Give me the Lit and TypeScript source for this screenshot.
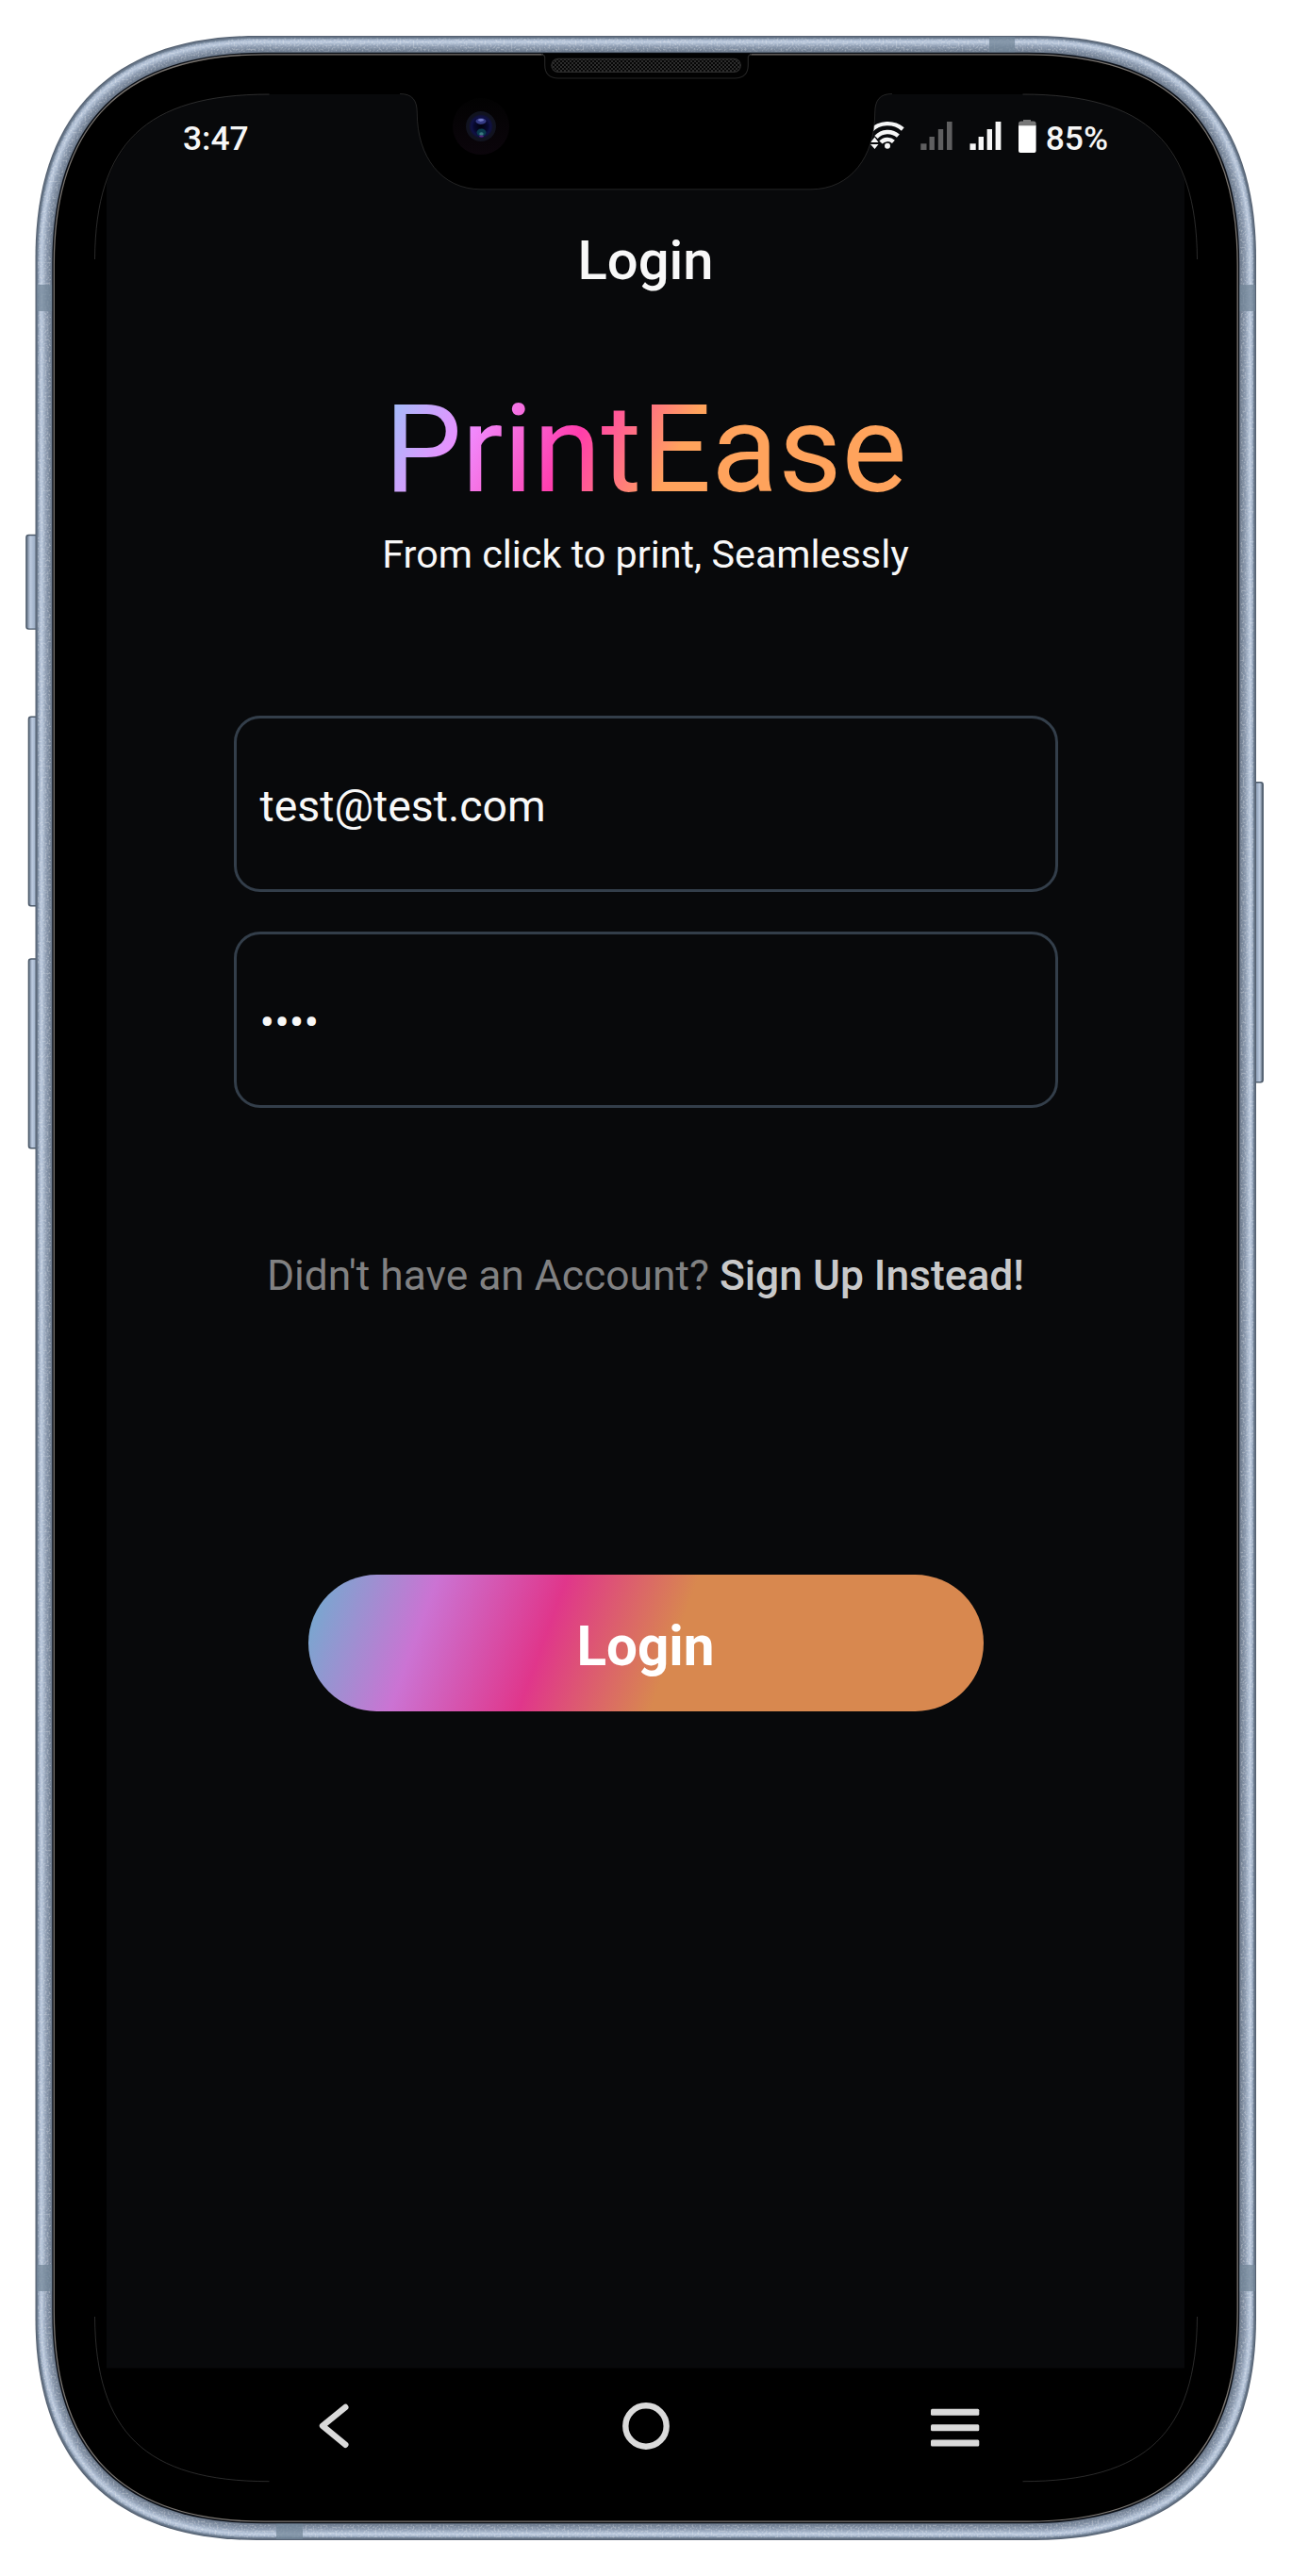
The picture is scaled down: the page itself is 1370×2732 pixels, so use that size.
import { LitElement, html, svg, css } from "lit";
import { customElement } from "lit/decorators.js";

type Rgb = [number, number, number];

/** Rounded outline with continuous corners: len = corner length, c = handle distance from the corner. */
function outline(x0: number, y0: number, x1: number, y1: number, len: number, c: number): string {
  return `M${x0 + len} ${y0}H${x1 - len}C${x1 - c} ${y0} ${x1} ${y0 + c} ${x1} ${y0 + len}V${y1 - len}` +
    `C${x1} ${y1 - c} ${x1 - c} ${y1} ${x1 - len} ${y1}H${x0 + len}C${x0 + c} ${y1} ${x0} ${y1 - c} ${x0} ${y1 - len}` +
    `V${y0 + len}C${x0} ${y0 + c} ${x0 + c} ${y0} ${x0 + len} ${y0}Z`;
}
const body = (i: number) => outline(37.5 + i, 38 + i, 1332 - i, 2694 - i, 235 - i * 0.6, 82 - i * 0.45);

const STOPS: [number, Rgb][] = [
  [0, [86, 98, 114]], [2, [112, 128, 148]], [3.5, [162, 178, 200]], [6, [188, 202, 222]],
  [8, [168, 183, 204]], [11, [138, 153, 174]], [15, [116, 130, 149]], [18, [106, 119, 137]],
];
function shade(i: number): string {
  for (let k = 1; k < STOPS.length; k++) {
    const [a, ca] = STOPS[k - 1];
    const [b, cb] = STOPS[k];
    if (i <= b) {
      const t = (i - a) / (b - a);
      return `rgb(${ca.map((v, n) => Math.round(v + (cb[n] - v) * t)).join(",")})`;
    }
  }
  return "#000";
}
const RINGS = Array.from({ length: 18 }, (_, i) => i);
const SCREEN = outline(100.5, 100, 1269.5, 2631.7, 185, 53);
const NOTCH =
  "M424 99.5C437 99.5 442.3 106 442.3 120C442.3 166 468 200.8 510 200.8H860" +
  "C902 200.8 927.7 166 927.7 120C927.7 106 933 99.5 946 99.5";

@customElement("phone-body")
class PhoneBody extends LitElement {
  static styles = css`
    :host { display: block; }
    svg { display: block; }
  `;
  render() {
    return html`<svg width="1370" height="2732" viewBox="0 0 1370 2732">
      <defs>
        <filter id="grain" filterUnits="userSpaceOnUse" x="30" y="30" width="1310" height="2672">
          <feTurbulence type="fractalNoise" baseFrequency="0.5" numOctaves="2" seed="4"></feTurbulence>
          <feColorMatrix values="0 0 0 0 1  0 0 0 0 1  0 0 0 0 1  4 0 0 0 -1.8"></feColorMatrix>
          <feComposite in2="SourceGraphic" operator="in"></feComposite>
        </filter>
        <linearGradient id="keyL" x1="0" x2="1">
          <stop offset="0" stop-color="#5f6d80"></stop><stop offset=".3" stop-color="#bccbe0"></stop>
          <stop offset=".6" stop-color="#a2b3ca"></stop><stop offset="1" stop-color="#8191a7"></stop>
        </linearGradient>
        <linearGradient id="keyR" x1="1" x2="0">
          <stop offset="0" stop-color="#4d5a69"></stop><stop offset=".3" stop-color="#bccbe0"></stop>
          <stop offset=".6" stop-color="#95a6bd"></stop><stop offset="1" stop-color="#77879b"></stop>
        </linearGradient>
        <clipPath id="scr"><path d=${SCREEN}></path></clipPath>
      </defs>
      <g stroke="#4c5a6a" stroke-width="1.4">
        <rect x="27.9" y="567.5" width="14" height="99.6" rx="2.5" fill="url(#keyL)"></rect>
        <rect x="30.4" y="760.2" width="12" height="200.5" rx="2.5" fill="url(#keyL)"></rect>
        <rect x="30.4" y="1017" width="12" height="200.7" rx="2.5" fill="url(#keyL)"></rect>
        <rect x="1328" y="829.8" width="11.2" height="318" rx="2.5" fill="url(#keyR)"></rect>
      </g>
      ${RINGS.map((i) => svg`<path d=${body(i)} fill=${shade(i)}></path>`)}
      <path d=${body(9.5)} fill="none" stroke="#fff" stroke-width="14" filter="url(#grain)" opacity=".26"></path>
      <g fill="#718597" fill-opacity=".72">
        <rect x="39" y="302" width="17" height="28"></rect>
        <rect x="1314" y="302" width="17" height="28"></rect>
        <rect x="39" y="2402" width="17" height="28"></rect>
        <rect x="1314" y="2402" width="17" height="28"></rect>
        <rect x="1049" y="39" width="27" height="17"></rect>
        <rect x="293" y="2676" width="28" height="17"></rect>
      </g>
      <path d=${body(17.8)} fill="#0b0f16"></path>
      <path d=${body(19.8)} fill="#000" stroke="#7a7570" stroke-width="1.3"></path>
      <rect x="113" y="100" width="1143" height="2411.5" fill="#08090b" clip-path="url(#scr)"></rect>
      <g fill="none" stroke="#555" stroke-width=".5">
        <path d="M100.5 275C101.5 153 153.5 100 285.5 100"></path>
        <path d="M1269.5 275C1268.5 153 1216.5 100 1084.5 100"></path>
        <path d="M100.5 2457C101.5 2579 153.5 2631.7 285.5 2631.7"></path>
        <path d="M1269.5 2457C1268.5 2579 1216.5 2631.7 1084.5 2631.7"></path>
      </g>
    </svg>`;
  }
}

@customElement("phone-notch")
class PhoneNotch extends LitElement {
  static styles = css`
    :host { display: block; }
    svg { display: block; }
  `;
  render() {
    return html`<svg width="1370" height="220" viewBox="0 0 1370 220">
      <defs>
        <pattern id="mesh" width="4" height="4" patternUnits="userSpaceOnUse">
          <rect width="4" height="4" fill="#060606"></rect>
          <rect width="2" height="2" fill="#2c2c2c"></rect><rect x="2" y="2" width="2" height="2" fill="#2c2c2c"></rect>
        </pattern>
        <radialGradient id="lens"><stop offset="0" stop-color="#02020c"></stop>
          <stop offset=".6" stop-color="#070930"></stop><stop offset=".8" stop-color="#101146"></stop>
          <stop offset="1" stop-color="#10112a"></stop></radialGradient>
        <linearGradient id="halo" x1="0" x2="0" y1="0" y2="1">
          <stop offset="0" stop-color="#020202"></stop><stop offset="1" stop-color="#0b050b"></stop>
        </linearGradient>
      </defs>
      <path d=${NOTCH + "Z"} fill="#000"></path>
      <path d=${NOTCH} fill="none" stroke="#444" stroke-width=".5"></path>
      <path d="M576 56.5H795V59H793.3V69C793.3 78 788 83 779 83H592C583 83 577.7 78 577.7 69V59H576Z" fill="#020202"></path>
      <path d="M574 57.8Q577.7 57.8 577.7 61V69C577.7 78 583 83 592 83H779C788 83 793.3 78 793.3 69V61Q793.3 57.8 797 57.8"
        fill="none" stroke="#242424" stroke-width="1.2"></path>
      <rect x="584.8" y="62.3" width="200.6" height="14" rx="7" fill="url(#mesh)" stroke="#2c2c2c" stroke-width="1.2"></rect>
      <circle cx="510" cy="134" r="30" fill="url(#halo)"></circle>
      <circle cx="510" cy="134" r="16" fill="#11131f"></circle>
      <circle cx="510" cy="134" r="12.5" fill="url(#lens)"></circle>
      <ellipse cx="510" cy="128.5" rx="5.5" ry="3.2" fill="#343a84"></ellipse>
      <ellipse cx="510" cy="127.3" rx="3" ry="1.4" fill="#7078c4"></ellipse>
      <ellipse cx="510.5" cy="140.5" rx="5" ry="4" fill="#0a3a4c"></ellipse>
      <ellipse cx="510.5" cy="142" rx="2.2" ry="1.8" fill="#3a7a80"></ellipse>
      <ellipse cx="510.5" cy="144.6" rx="2.4" ry="1" fill="#5a2480"></ellipse>
    </svg>`;
  }
}

@customElement("status-bar")
class StatusBar extends LitElement {
  static styles = css`
    :host { display: flex; justify-content: space-between; box-sizing: border-box; height: 90px;
      padding: 0 81px 0 81px; color: #f6f6f6; font: 500 35.4px/94px Roboto, sans-serif; }
    .right { display: flex; }
    svg { display: block; }
    .pct { margin-left: 1px; }
  `;
  render() {
    return html`<span>3:47</span>
      <div class="right">
        <svg width="187" height="90" viewBox="920 100 187 90">
          <g fill="none" stroke="#f6f6f6" stroke-width="4.4">
            <path d="M922.5 138.5A25 25 0 0 1 956.3 137"></path>
            <path d="M928 145.5A16.5 16.5 0 0 1 951.4 144.2"></path>
            <path d="M933 151A9.5 9.5 0 0 1 946.4 150.4"></path>
          </g>
          <circle cx="940" cy="154.8" r="3" fill="#f6f6f6"></circle>
          <path d="M922 151L926.5 145.5L930.5 151ZM922 153H930.5L926.5 158Z" fill="#f6f6f6"></path>
          <g fill="#5f5f60">
            <rect x="975.3" y="152.3" width="6.2" height="6.7"></rect><rect x="984.5" y="145" width="5.4" height="14"></rect>
            <rect x="993.8" y="137" width="5.4" height="22"></rect><rect x="1003" y="129" width="5.6" height="30"></rect>
          </g>
          <g fill="#f6f6f6">
            <rect x="1027.5" y="152.3" width="6.2" height="6.7"></rect><rect x="1036.6" y="145" width="5.4" height="14"></rect>
            <rect x="1045.6" y="137" width="5.4" height="22"></rect><rect x="1054.6" y="129" width="5.8" height="30"></rect>
          </g>
          <path d="M1079 134V131Q1079 128.5 1082 128.5H1084V127H1092V128.5H1095Q1097.6 128.5 1097.6 131V134Z" fill="#777"></path>
          <path d="M1079 133.3H1097.6V160Q1097.6 162 1095.6 162H1081Q1079 162 1079 160Z" fill="#fff"></path>
        </svg>
        <span class="pct">85%</span>
      </div>`;
  }
}

@customElement("login-form")
class LoginForm extends LitElement {
  static styles = css`
    :host { display: flex; flex-direction: column; align-items: center; font-family: Roboto, sans-serif; color: #f8f8f8; }
    .title { margin-top: 51px; font-size: 58px; line-height: 70px; font-weight: 500; white-space: nowrap; }
    .brand { margin-top: 98px; font-size: 130.4px; line-height: 136px; white-space: nowrap; color: transparent;
      background: linear-gradient(116deg, #94c6f8 0, #f08cff 102px, #ff3dac 208px, #ffa35c 312px);
      -webkit-background-clip: text; background-clip: text; }
    .tag { margin-top: 18px; font-size: 41.3px; line-height: 50px; white-space: nowrap; }
    .fields { display: flex; flex-direction: column; gap: 42px; width: 874px; margin-top: 146px; }
    .field { box-sizing: border-box; height: 187px; border: 3px solid #333e4a; border-radius: 28px;
      padding-left: 25px; font-size: 46.4px; line-height: 186px; }
    .switch { margin-top: 151px; font-size: 44.35px; line-height: 54px; color: #818182; white-space: nowrap; }
    .switch b { font-weight: 500; color: #c9c9ca; }
    .go { display: flex; align-items: center; justify-content: center; box-sizing: border-box; width: 716px; height: 145px;
      margin-top: 290px; padding-top: 8px; border: 0; border-radius: 73px; color: #fff; font: 700 58.4px/70px Roboto, sans-serif;
      background: linear-gradient(110deg, #6cafcf 0, #cb73d3 18%, #e0368b 35.8%, #d8884f 54%); }
  `;
  render() {
    return html`
      <div class="title">Login</div>
      <div class="brand">PrintEase</div>
      <div class="tag">From click to print, Seamlessly</div>
      <div class="fields">
        <div class="field">test@test.com</div>
        <div class="field">••••</div>
      </div>
      <div class="switch">Didn't have an Account? <b>Sign Up Instead!</b></div>
      <button class="go">Login</button>`;
  }
}

@customElement("nav-bar")
class NavBar extends LitElement {
  static styles = css`
    :host { display: flex; align-items: center; justify-content: space-between; box-sizing: border-box;
      height: 122px; padding: 2px 217px 0 224px; }
    svg { display: block; }
  `;
  render() {
    return html`
      <svg width="46" height="50" viewBox="0 0 46 50" fill="none" stroke="#dadada" stroke-width="6.4" stroke-linecap="round" stroke-linejoin="round">
        <path d="M29.3 5L5 24.8L29.3 44.8"></path></svg>
      <svg width="52" height="52" viewBox="0 0 52 52"><circle cx="26" cy="26" r="21.7" fill="none" stroke="#dadada" stroke-width="6.4"></circle></svg>
      <svg width="52" height="52" viewBox="0 0 52 52" fill="#dadada">
        <rect y="7.7" width="51.3" height="7" rx="1.5"></rect><rect y="24.2" width="51.3" height="7" rx="1.5"></rect>
        <rect y="40.6" width="51.3" height="7" rx="1.5"></rect></svg>`;
  }
}

@customElement("app-root")
class AppRoot extends LitElement {
  static styles = css`
    :host { display: block; position: relative; width: 1370px; height: 2732px; background: #fff; overflow: hidden; }
    .body, .notch { position: absolute; top: 0; left: 0; }
    .screen { position: relative; display: flex; flex-direction: column; box-sizing: border-box; width: 1370px;
      height: 2732px; padding: 100px 114px 99px 113px; }
    .form { flex: 1; }
  `;
  render() {
    return html`
      <phone-body class="body"></phone-body>
      <main class="screen">
        <status-bar></status-bar>
        <login-form class="form"></login-form>
        <nav-bar></nav-bar>
      </main>
      <phone-notch class="notch"></phone-notch>`;
  }
}
